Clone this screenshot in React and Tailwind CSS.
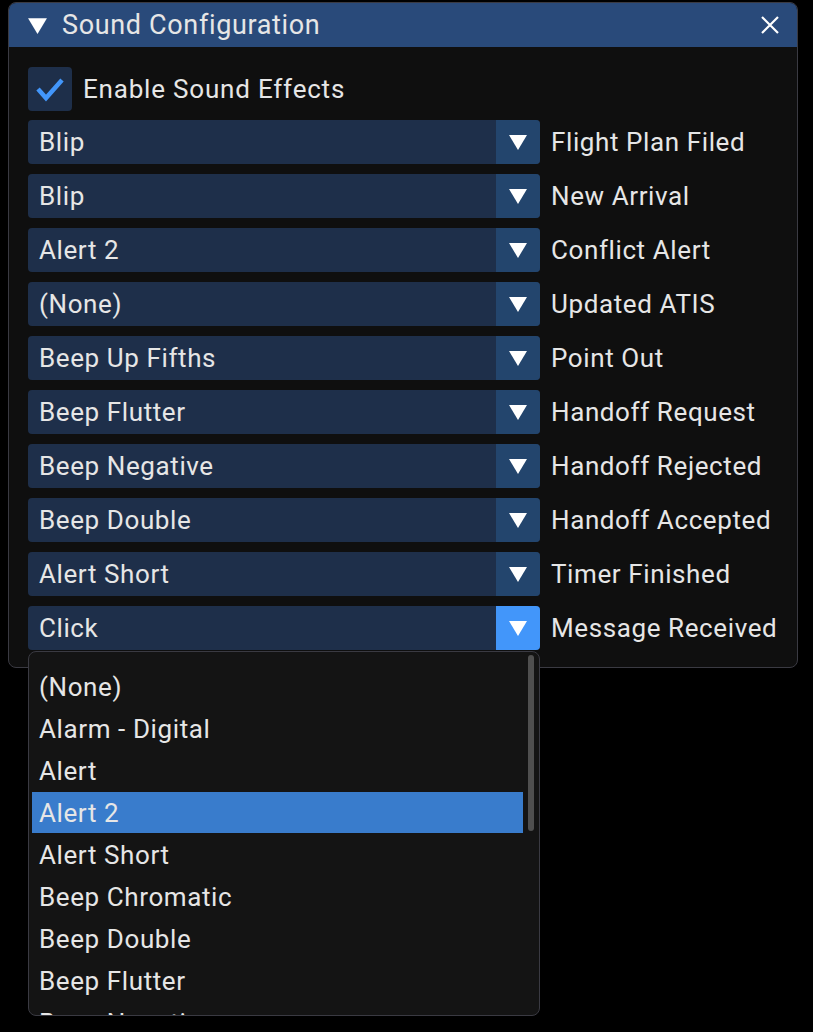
const rows = [
  ['Blip', 'Flight Plan Filed'],
  ['Blip', 'New Arrival'],
  ['Alert 2', 'Conflict Alert'],
  ['(None)', 'Updated ATIS'],
  ['Beep Up Fifths', 'Point Out'],
  ['Beep Flutter', 'Handoff Request'],
  ['Beep Negative', 'Handoff Rejected'],
  ['Beep Double', 'Handoff Accepted'],
  ['Alert Short', 'Timer Finished'],
  ['Click', 'Message Received'],
]

const options = [
  '(None)',
  'Alarm - Digital',
  'Alert',
  'Alert 2',
  'Alert Short',
  'Beep Chromatic',
  'Beep Double',
  'Beep Flutter',
  'Beep Negative',
]

function DownArrow({ className = 'w-[20px] h-[16px]' }) {
  return (
    <svg viewBox="0 0 20 16" className={className}>
      <polygon points="1,1 19,1 10,16" fill="#ffffff" />
    </svg>
  )
}

function Combo({ value, label, hot }) {
  return (
    <div className="flex items-center gap-[11px]">
      <div className="flex h-[44px] w-[512px] rounded-[4px] overflow-hidden bg-[#1e2f4a]">
        <div className="flex-1 flex items-center pl-[11px] text-[#e6e6e6]">{value}</div>
        <div className={`w-[44px] flex items-center justify-center ${hot ? 'bg-[#4296fa]' : 'bg-[#23456d]'}`}>
          <DownArrow />
        </div>
      </div>
      <span className="text-[#e6e6e6]">{label}</span>
    </div>
  )
}

export default function App() {
  return (
    <div
      className="relative w-[813px] h-[1032px] bg-black text-[26px] leading-none tracking-[0.6px]"
      style={{ fontFamily: 'Roboto, "Liberation Sans", sans-serif' }}
    >
      <div className="pt-[2px] pl-[8px]">
        <div className="w-[790px] rounded-[8px] border border-[#3a3a42] bg-[#0f0f0f] overflow-hidden">
          <div className="h-[44px] bg-[#294a7a] flex items-center pl-[18px] pr-[17px]">
            <DownArrow className="w-[21px] h-[17px]" />
            <span className="ml-[14px] text-[#e6e6e6] text-[27px] tracking-[0.65px]">Sound Configuration</span>
            <svg viewBox="0 0 20 20" className="ml-auto w-[20px] h-[20px]">
              <path d="M2 2 L18 18 M18 2 L2 18" stroke="#ffffff" strokeWidth="2.2" />
            </svg>
          </div>
          <div className="pl-[19px] pt-[20px] pb-[17px] flex flex-col gap-[10px]">
            <div className="flex items-center gap-[11px] mb-[-1px]">
              <div className="w-[44px] h-[44px] rounded-[4px] bg-[#1e2f4a] flex items-center justify-center">
                <svg viewBox="0 0 32 32" className="w-[32px] h-[32px]">
                  <path d="M4 16 L12 25 L28 7" fill="none" stroke="#4296fa" strokeWidth="4.5" />
                </svg>
              </div>
              <span className="text-[#e6e6e6] tracking-[0.8px]">Enable Sound Effects</span>
            </div>
            {rows.map(([v, l], i) => (
              <Combo key={i} value={v} label={l} hot={i === rows.length - 1} />
            ))}
          </div>
        </div>
      </div>

      <div className="absolute left-[28px] top-[651px] w-[512px] h-[365px] rounded-[8px] border border-[#3a3a42] bg-[#141414] overflow-hidden">
        <div className="flex">
          <div className="pt-[14px] pl-[3px] w-[494px] flex flex-col gap-[1px]">
            {options.map((o) => (
              <div
                key={o}
                className={`h-[41px] flex items-center pl-[7px] text-[#e6e6e6] ${o === 'Alert 2' ? 'bg-[#397ccc]' : ''}`}
              >
                {o}
              </div>
            ))}
          </div>
          <div className="ml-[5px] mt-[3px] w-[6px] h-[176px] rounded-full bg-[#4f4f4f]" />
        </div>
      </div>
    </div>
  )
}
